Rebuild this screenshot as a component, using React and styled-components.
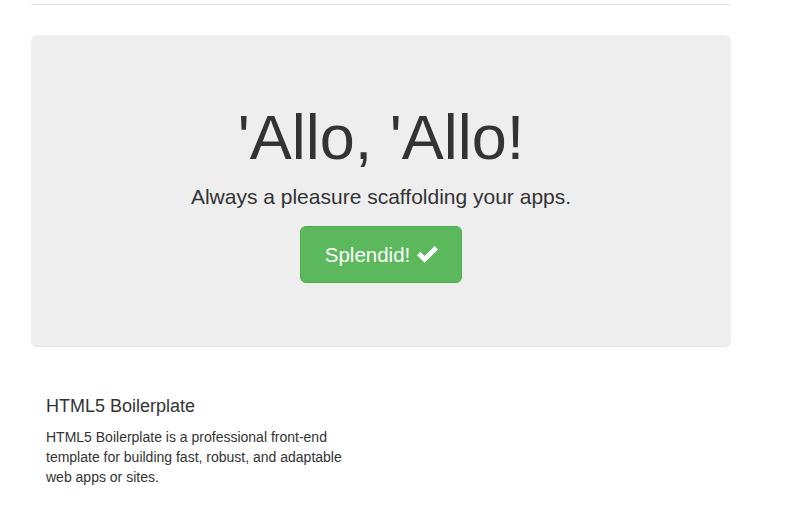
import React from "react";
import styled, { createGlobalStyle } from "styled-components";

const GlobalStyle = createGlobalStyle`
    html, body {
        margin: 0;
        padding: 0;
        background: #fff;
    }
    body {
        font-family: "Liberation Sans", Arial, Helvetica, sans-serif;
        font-size: 14px;
        line-height: 1.428571;
        color: #333;
    }
    * {
        box-sizing: border-box;
    }
`;

export default function App() {
    return (
        <React.Fragment>
            <GlobalStyle />
            <Container>
                <Header />
                <Jumbotron>
                    <Title>'Allo, 'Allo!</Title>
                    <Lead>Always a pleasure scaffolding your apps.</Lead>
                    <ButtonRow>
                        <SuccessButton href="#">
                            Splendid!
                            <CheckIcon />
                        </SuccessButton>
                    </ButtonRow>
                </Jumbotron>
                <Marketing>
                    <Column>
                        <Heading>HTML5 Boilerplate</Heading>
                        <Text>
                            HTML5 Boilerplate is a professional front-end template for building
                            fast, robust, and adaptable web apps or sites.
                        </Text>
                    </Column>
                </Marketing>
            </Container>
        </React.Fragment>
    );
}

function CheckIcon() {
    return (
        <Icon width="21" height="17" viewBox="0 0 21 17">
            <path d="M0 9.2 L3.4 5.8 L7.6 10 L17.6 0 L21 3.4 L7.6 16.8 Z" fill="#fff" />
        </Icon>
    );
}

const Container = styled.div`
    width: 700px;
    margin-left: 31px;
`;
const Header = styled.div`
    height: 5px;
    border-bottom: 1px solid #e5e5e5;
    margin-bottom: 30px;
`;
const Jumbotron = styled.div`
    background: #eee;
    border-radius: 6px;
    border-bottom: 1px solid #e5e5e5;
    padding: 48px 60px;
    text-align: center;
    margin-bottom: 30px;
`;
const Title = styled.h1`
    margin: 20px 0 10px;
    font-size: 63px;
    font-weight: 500;
    line-height: 1.1;
    color: #333;
`;
const Lead = styled.p`
    margin: 0 0 14px;
    font-size: 21px;
    line-height: 30px;
    font-weight: 200;
`;
const ButtonRow = styled.div`
    display: flex;
    justify-content: center;
    margin-bottom: 15px;
`;
const SuccessButton = styled.a`
    display: inline-flex;
    align-items: center;
    gap: 7px;
    height: 57px;
    padding: 0 23px 0 24px;
    font-size: 20.5px;
    color: #fff;
    text-decoration: none;
    background: #5cb85c;
    border: 1px solid #4cae4c;
    border-radius: 6px;
`;
const Icon = styled.svg`
    display: block;
    margin-top: -1px;
`;
const Marketing = styled.div`
    display: flex;
    margin: 40px 0 0;
`;
const Column = styled.div`
    width: 350px;
    padding: 0 15px;
`;
const Heading = styled.h4`
    margin: 10px 0 10px;
    font-size: 18px;
    font-weight: 500;
    line-height: 1.1;
`;
const Text = styled.p`
    margin: 0;
    font-size: 14px;
    line-height: 20px;
`;
